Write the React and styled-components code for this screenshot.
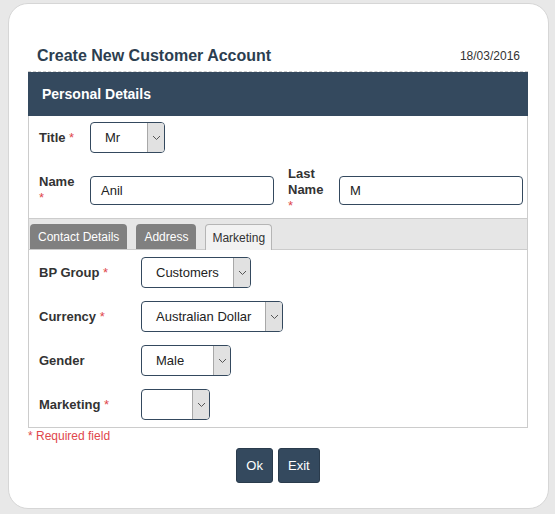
import React from 'react';
import styled, { createGlobalStyle } from 'styled-components';

const GlobalStyle = createGlobalStyle`
  body {
    margin: 0;
    background: #e8e8e8;
    font-family: "Liberation Sans", Arial, sans-serif;
  }
`;

const Card = styled.div`
  box-sizing: border-box;
  margin: 3px 0 0 8px;
  width: 541px;
  height: 506px;
  background: #fff;
  border: 1px solid #d6d6d6;
  border-radius: 20px;
  padding: 37px 20px 0 19px;
`;

const TitleRow = styled.div`
  display: flex;
  align-items: center;
  justify-content: space-between;
  height: 30px;
  padding: 0 8px 0 9px;
  border-bottom: 1px dashed #cfcfcf;
`;

const Title = styled.h1`
  margin: 0;
  font-size: 16px;
  font-weight: bold;
  color: #2c3e50;
`;

const DateText = styled.span`
  font-size: 12px;
  color: #333;
`;

const SectionBar = styled.div`
  height: 44px;
  background: #34495e;
  color: #fff;
  font-size: 14px;
  font-weight: bold;
  display: flex;
  align-items: center;
  padding-left: 14px;
`;

const Box = styled.div`
  border: 1px solid #cccccc;
  border-top: none;
  padding: ${p => p.$pad};
  display: flex;
  flex-direction: column;
  gap: ${p => p.$gap}px;
`;

const Row = styled.div`
  display: flex;
  align-items: center;
`;

const Label = styled.label`
  width: ${p => p.$w}px;
  margin-right: ${p => p.$mr}px;
  font-size: 13px;
  font-weight: bold;
  color: #333;
  line-height: 16px;
  flex-shrink: 0;
`;

const Star = styled.span`
  color: #e0474c;
  font-weight: normal;
`;

const TextInput = styled.div`
  box-sizing: border-box;
  width: ${p => p.$w}px;
  height: 29px;
  border: 1px solid #34495e;
  border-radius: 4px;
  padding-left: 10px;
  display: flex;
  align-items: center;
  font-size: 13px;
  color: #222;
  margin-right: ${p => p.$mr || 0}px;
`;

const SelectBox = styled.div`
  box-sizing: border-box;
  width: ${p => p.$w}px;
  height: 31px;
  border: 1px solid #34495e;
  border-radius: 4px;
  display: flex;
  overflow: hidden;
  font-size: 13px;
  color: #222;
`;

const SelectValue = styled.span`
  flex: 1;
  display: flex;
  align-items: center;
  padding-left: ${p => p.$pl}px;
`;

const Arrow = styled.span`
  width: 16px;
  background: #e1e1e1;
  border-left: 1px solid #a8a8a8;
  display: flex;
  align-items: center;
  justify-content: center;
`;

const TabStrip = styled.div`
  display: flex;
  align-items: flex-end;
  gap: 9px;
  height: 31px;
  box-sizing: border-box;
  padding-left: 1px;
  background: #e6e6e6;
  border: 1px solid #cccccc;
  border-top: none;
`;

const Tab = styled.div`
  box-sizing: border-box;
  padding: 0 ${p => (p.$active ? 6 : 8)}px;
  display: flex;
  align-items: center;
  font-size: 12px;
  border-radius: 4px 4px 0 0;
  background: ${p => (p.$active ? '#f2f2f2' : '#808080')};
  color: ${p => (p.$active ? '#333' : '#fff')};
  border: ${p => (p.$active ? '1px solid #b5b5b5' : 'none')};
  border-bottom: none;
  margin-bottom: ${p => (p.$active ? '-1px' : '0')};
  height: ${p => (p.$active ? '26px' : '25px')};
`;

const Required = styled.div`
  font-size: 12px;
  line-height: 14px;
  color: #e0474c;
  margin-top: 1px;
`;

const Buttons = styled.div`
  display: flex;
  justify-content: center;
  gap: 5px;
  margin-top: 5px;
`;

const Button = styled.button`
  height: 35px;
  padding: 0 9px;
  background: #34495e;
  border: 1px solid #2a3b4c;
  border-radius: 3px;
  color: #fff;
  font-family: "Liberation Sans", Arial, sans-serif;
  font-size: 13px;
`;

function Select({ value, width, pl = 14 }) {
  return (
    <SelectBox $w={width}>
      <SelectValue $pl={pl}>{value}</SelectValue>
      <Arrow>
        <svg width="9" height="6" viewBox="0 0 9 6">
          <path d="M1 1 L4.5 4.5 L8 1" fill="none" stroke="#555" strokeWidth="1" />
        </svg>
      </Arrow>
    </SelectBox>
  );
}

export default function App() {
  return (
    <>
      <GlobalStyle />
      <Card>
        <TitleRow>
          <Title>Create New Customer Account</Title>
          <DateText>18/03/2016</DateText>
        </TitleRow>
        <SectionBar>Personal Details</SectionBar>
        <Box $pad="6px 0 4px 10px" $gap={13}>
          <Row>
            <Label $w={40} $mr={11}>Title <Star>*</Star></Label>
            <Select value="Mr" width={75} />
          </Row>
          <Row>
            <Label $w={40} $mr={11}>Name<br /><Star>*</Star></Label>
            <TextInput $w={184} $mr={14}>Anil</TextInput>
            <Label $w={40} $mr={11}>Last Name<br /><Star>*</Star></Label>
            <TextInput $w={184}>M</TextInput>
          </Row>
        </Box>
        <TabStrip>
          <Tab>Contact Details</Tab>
          <Tab>Address</Tab>
          <Tab $active>Marketing</Tab>
        </TabStrip>
        <Box $pad="7px 0 7px 10px" $gap={13}>
          <Row>
            <Label $w={92} $mr={10}>BP Group <Star>*</Star></Label>
            <Select value="Customers" width={110} />
          </Row>
          <Row>
            <Label $w={92} $mr={10}>Currency <Star>*</Star></Label>
            <Select value="Australian Dollar" width={142} />
          </Row>
          <Row>
            <Label $w={92} $mr={10}>Gender</Label>
            <Select value="Male" width={90} />
          </Row>
          <Row>
            <Label $w={92} $mr={10}>Marketing <Star>*</Star></Label>
            <Select value="" width={69} />
          </Row>
        </Box>
        <Required>* Required field</Required>
        <Buttons>
          <Button>Ok</Button>
          <Button>Exit</Button>
        </Buttons>
      </Card>
    </>
  );
}
